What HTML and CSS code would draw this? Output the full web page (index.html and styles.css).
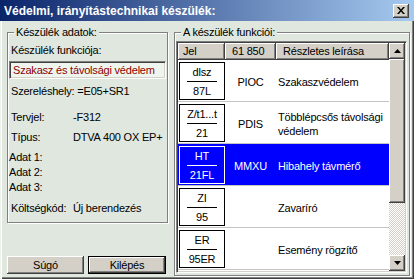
FILE: index.html
```html
<!DOCTYPE html>
<html lang="hu">
<head>
  <meta charset="UTF-8" />
  <title>Védelmi, irányítástechnikai készülék</title>
  <link rel="stylesheet" href="styles.css">
</head>
<body>
  <div class="dialog">
    <div class="titlebar">
      <span class="title">Védelmi, irányítástechnikai készülék:</span>
      <span class="close">
        <svg width="8" height="7" viewBox="0 0 8 7"><path d="M0 0h2l2 2.5 2-2.5h2l-3 3.5 3 3.5h-2l-2-2.5-2 2.5h-2l3-3.5z" fill="#000"/></svg>
      </span>
    </div>

    <div class="client">
      <div class="left">
        <div class="group group-data">
          <div class="group-title">Készülék adatok:</div>
          <div class="field-label">Készülék funkciója:</div>
          <div class="input">Szakasz és távolsági védelem</div>
          <div class="line">Szereléshely: =E05+SR1</div>
          <div class="pair gap-12"><span class="key">Tervjel:</span><span>-F312</span></div>
          <div class="pair gap-6"><span class="key">Típus:</span><span>DTVA 400 OX EP+</span></div>
          <div class="pair gap-6 pair-adat"><span class="key">Adat 1:</span></div>
          <div class="pair gap-1 pair-adat"><span class="key">Adat 2:</span></div>
          <div class="pair gap-1 pair-adat"><span class="key">Adat 3:</span></div>
          <div class="pair gap-7"><span class="key">Költségkód:</span><span>Új berendezés</span></div>
        </div>
        <div class="buttons">
          <button class="btn btn-help">Súgó</button>
          <button class="btn btn-default">Kilépés</button>
        </div>
      </div>

      <div class="group group-func">
        <div class="group-title">A készülék funkciói:</div>
        <div class="list">
          <div class="list-main">
            <div class="list-head">
              <div class="hcell">Jel</div>
              <div class="hcell">61 850</div>
              <div class="hcell">Részletes leírása</div>
            </div>

            <div class="row">
              <div class="cell"><div class="sym"><span>dlsz</span><i></i><span>87L</span></div></div>
              <div class="cell cell-code">PIOC</div>
              <div class="cell cell-desc">Szakaszvédelem</div>
            </div>
            <div class="row">
              <div class="cell"><div class="sym"><span>Z/t1...t</span><i></i><span>21</span></div></div>
              <div class="cell cell-code">PDIS</div>
              <div class="cell cell-desc">Többlépcsős távolsági védelem</div>
            </div>
            <div class="row row-selected">
              <div class="cell"><div class="sym"><span>HT</span><i></i><span>21FL</span></div></div>
              <div class="cell cell-code">MMXU</div>
              <div class="cell cell-desc">Hibahely távmérő</div>
            </div>
            <div class="row">
              <div class="cell"><div class="sym"><span>ZI</span><i></i><span>95</span></div></div>
              <div class="cell cell-code"></div>
              <div class="cell cell-desc">Zavaríró</div>
            </div>
            <div class="row">
              <div class="cell"><div class="sym"><span>ER</span><i></i><span>95ER</span></div></div>
              <div class="cell cell-code"></div>
              <div class="cell cell-desc">Esemény rögzítő</div>
            </div>
          </div>

          <div class="scrollbar">
            <div class="sb-btn"><svg width="7" height="4" viewBox="0 0 7 4"><path d="M3.5 0L7 4H0z" fill="#000"/></svg></div>
            <div class="sb-thumb"></div>
            <div class="sb-track"></div>
            <div class="sb-btn"><svg width="7" height="4" viewBox="0 0 7 4"><path d="M0 0h7L3.5 4z" fill="#000"/></svg></div>
          </div>
        </div>
      </div>
    </div>
  </div>
</body>
</html>
```

FILE: styles.css
```css
* { box-sizing: border-box; }
body {
  margin: 0;
  font-family: "Liberation Sans", Arial, sans-serif;
  font-size: 11px;
  letter-spacing: -0.2px;
  color: #000;
}
.dialog {
  width: 414px; height: 279px;
  display: flex; flex-direction: column;
  background: #dfe7df;
  overflow: hidden;
}

/* title bar */
.titlebar {
  height: 21px; flex: none;
  display: flex; align-items: center; justify-content: space-between;
  padding: 0 5px 0 4px;
  background: linear-gradient(to right, #0a246a, #a6caf0);
}
.title {
  color: #fff;
  font-weight: bold;
  font-size: 12px;
  letter-spacing: 0;
}
.close {
  width: 16px; height: 14px;
  display: flex; align-items: center; justify-content: center;
  background: #d4d0c8;
  box-shadow: inset -1px -1px #404040, inset 1px 1px #fff, inset -2px -2px #808080;
}

/* client area */
.client {
  flex: 1;
  display: flex;
  padding: 11px 4px 3px 7px;
  box-shadow: inset 1px 0 #eef3ee, inset 2px 0 #fff, inset -1px -1px #404040, inset -2px -2px #808080;
}
.left {
  width: 161px;
  display: flex; flex-direction: column;
}

/* group box */
.group {
  position: relative;
  border: 1px solid #808080;
  box-shadow: inset 1px 1px #fff, 1px 1px #fff;
}
.group-title {
  position: absolute;
  top: -7px; left: 6px;
  padding: 0 2px;
  line-height: 13px;
  background: #dfe7df;
}
.group-data {
  height: 191px;
  padding: 0 0 0 0;
}
.group-func {
  width: 236px; height: 244px;
  margin-left: 6px;
  padding: 8px 2px 0 1px;
}

/* data fields */
.field-label, .line, .pair {
  line-height: 14px;
  padding-left: 3px;
  white-space: nowrap;
}
.field-label { margin-top: 10px; }
.input {
  margin: 4px 0 0 1px;
  width: 157px; height: 18px;
  padding: 0 0 0 3px;
  line-height: 16px;
  color: #8c0000;
  background: #eef5ee;
  border: 1px solid;
  border-color: #808080 #fff #fff #808080;
  box-shadow: inset 1px 1px #404040, inset -1px -1px #d4d0c8;
}
.line { margin-top: 5px; }
.pair { display: flex; }
.key { width: 62px; }
.pair-adat { padding-left: 1px; }
.pair-adat .key { width: 64px; }
.gap-1 { margin-top: 1px; }
.gap-6 { margin-top: 6px; }
.gap-7 { margin-top: 7px; }
.gap-12 { margin-top: 12px; }

/* buttons */
.buttons {
  display: flex; gap: 4px;
  margin-top: 33px;
}
.btn {
  height: 18px;
  padding: 0;
  font: inherit;
  letter-spacing: inherit;
  color: #000;
  background: #d4d0c8;
  border: none;
  box-shadow: inset -1px -1px #404040, inset 1px 1px #fff, inset -2px -2px #808080;
}
.btn-help { width: 77px; }
.btn-default {
  width: 78px;
  border: 1px solid #000;
}

/* list */
.list {
  display: flex;
  height: 232px;
  border: 1px solid;
  border-color: #808080 #fff #fff #808080;
  box-shadow: inset 1px 1px #404040, inset -1px -1px #d4d0c8;
  padding: 1px;
  background: #fff;
}
.list-main {
  width: 211px;
  overflow: hidden;
}
.list-head, .row {
  display: grid;
  grid-template-columns: 47px 51px 113px;
}
.list-head { height: 17px; }
.hcell {
  background: #d4d0c8;
  line-height: 16px;
  padding-left: 5px;
  box-shadow: inset -1px -1px #404040, inset 1px 1px #fff, inset -2px -2px #808080;
}
.hcell + .hcell { padding-left: 7px; }
.row {
  height: 42px;
  border-bottom: 1px solid #c4c4c4;
}
.cell { display: flex; align-items: center; padding-top: 2px; }
.cell-code { justify-content: center; }
.cell-desc { padding-left: 2px; line-height: 14px; }
.row-selected { background: #0000ff; color: #fff; }

.sym {
  align-self: flex-start;
  margin: 0 0 0 1px;
  width: 46px; height: 38px;
  border: 1px solid #000;
  display: flex; flex-direction: column; align-items: center;
  padding-top: 2px;
  line-height: 14px;
  white-space: nowrap;
  overflow: hidden;
}
.sym i {
  display: block;
  width: 30px; height: 1px;
  margin: 2px 0 2px;
  background: #000;
}
.row-selected .sym { border-color: #fff; }
.row-selected .sym i { background: #fff; }

/* scrollbar */
.scrollbar {
  width: 16px;
  display: flex; flex-direction: column;
}
.sb-btn, .sb-thumb {
  background: #d4d0c8;
  box-shadow: inset -1px -1px #404040, inset 1px 1px #fff, inset -2px -2px #808080;
}
.sb-btn {
  height: 16px;
  display: flex; align-items: center; justify-content: center;
}
.sb-thumb { height: 144px; }
.sb-track {
  flex: 1;
  background: repeating-conic-gradient(#d4d0c8 0 25%, #fff 0 50%) 0 0 / 2px 2px;
}
```
